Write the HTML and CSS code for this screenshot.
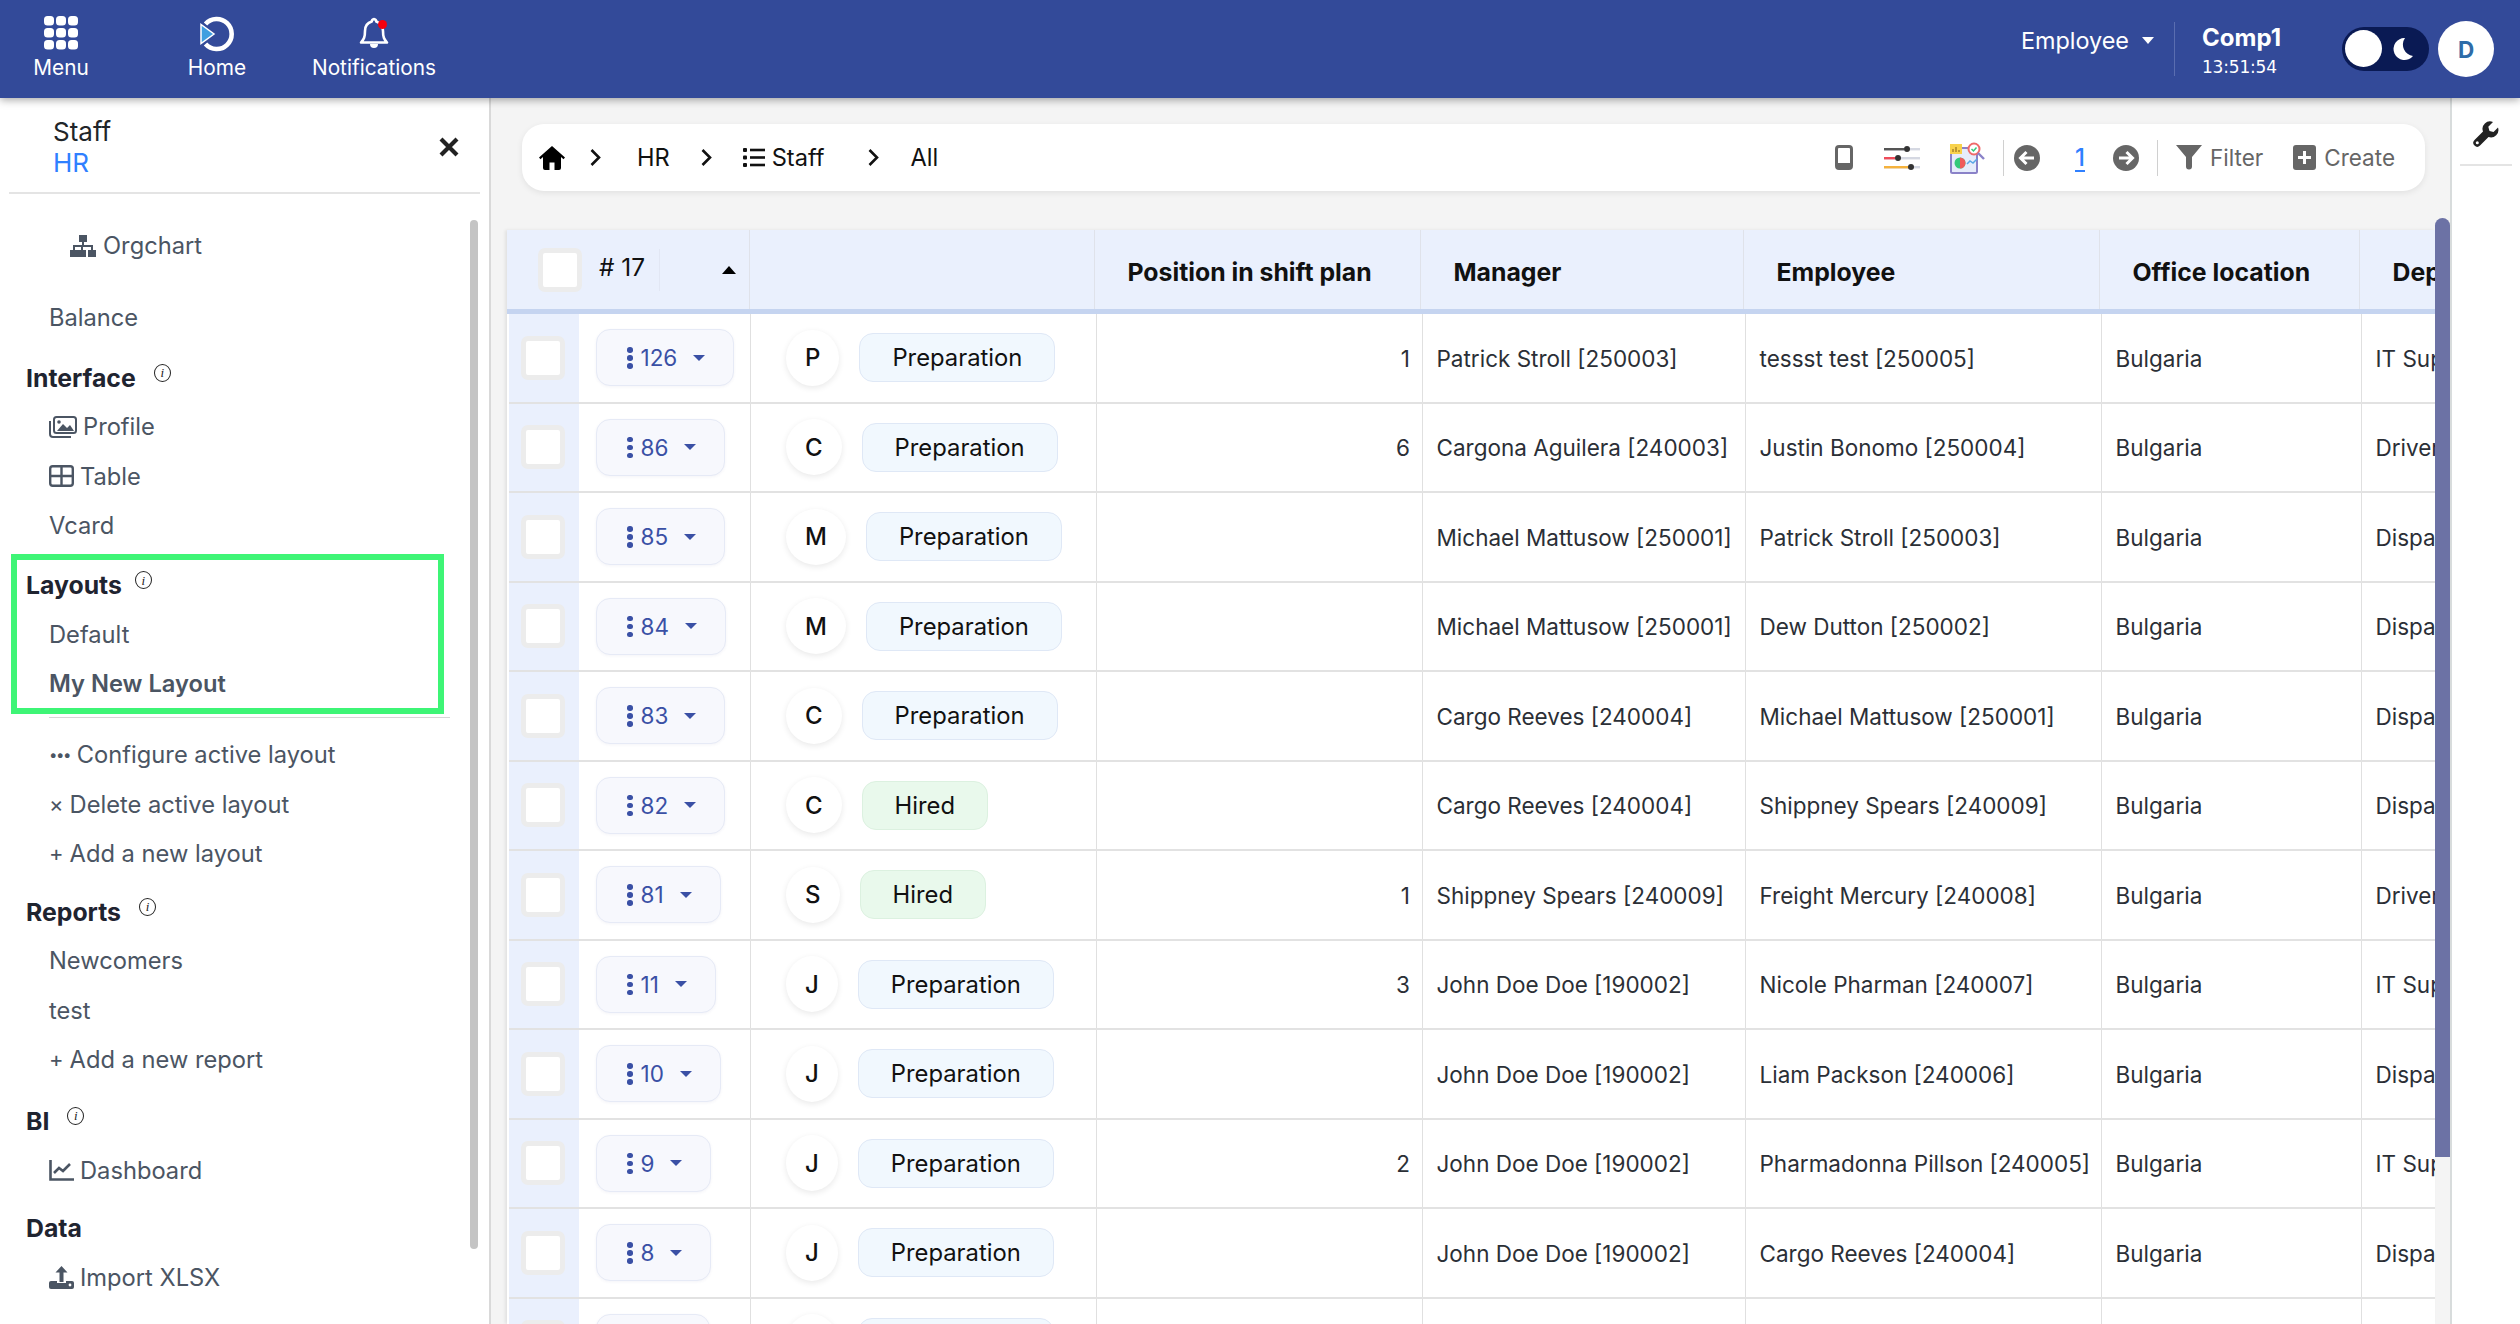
FILE: index.html
```html
<!DOCTYPE html>
<html lang="en">
<head>
<meta charset="utf-8">
<title>Staff</title>
<link rel="stylesheet" href="styles.css">
</head>
<body>
<header class="topbar">
  <nav class="topnav">
    <a class="navitem navitem-menu">
      <svg class="navicon" width="34" height="34" viewBox="0 0 34 34"><g fill="#fff"><rect x="0" y="0" width="10" height="9.5" rx="3.5"/><rect x="12" y="0" width="10" height="9.5" rx="3.5"/><rect x="24" y="0" width="10" height="9.5" rx="3.5"/><rect x="0" y="12" width="10" height="9.5" rx="3.5"/><rect x="12" y="12" width="10" height="9.5" rx="3.5"/><rect x="24" y="12" width="10" height="9.5" rx="3.5"/><rect x="0" y="24" width="10" height="9.5" rx="3.5"/><rect x="12" y="24" width="10" height="9.5" rx="3.5"/><rect x="24" y="24" width="10" height="9.5" rx="3.5"/></g></svg>
      <span>Menu</span>
    </a>
    <a class="navitem navitem-home">
      <svg class="navicon" width="36" height="36" viewBox="0 0 36 36"><path d="M6.500 8A15 15 0 1 1 6.500 28" fill="none" stroke="#fff" stroke-width="4.600"/><path d="M2 8.500v19L15 18z" fill="#3f9fe0" stroke="#fff" stroke-width="1.500"/></svg>
      <span>Home</span>
    </a>
    <a class="navitem navitem-notif">
      <span class="bellwrap">
        <svg class="navicon" width="30" height="34" viewBox="0 0 30 34"><path d="M15 3a2.400 2.400 0 0 1 2.200 2.600C22 7 24 10.500 24 15c0 6 1 8 4 11.500H2C5 23 6 21 6 15c0-4.500 2-8 6.800-9.400A2.400 2.400 0 0 1 15 3z" fill="none" stroke="#fff" stroke-width="2.600" stroke-linejoin="round"/><path d="M11 28h8a4 4 0 0 1-8 0z" fill="#fff"/></svg>
        <i class="bell-dot"></i>
      </span>
      <span>Notifications</span>
    </a>
  </nav>
  <div class="topright">
    <div class="role">Employee<i class="caret caret-white"></i></div>
    <div class="company">
      <b>Comp1</b>
      <span class="clock">13:51:54</span>
    </div>
    <div class="toggle">
      <i class="knob"></i>
      <svg width="20" height="22" viewBox="0 0 20 22"><path d="M12 0a11 11 0 1 0 8 18A11.500 11.500 0 0 1 12 0z" fill="#fff"/></svg>
    </div>
    <div class="avatar">D</div>
  </div>
</header>

<div class="workspace">
  <aside class="sidebar">
    <div class="sidehead">
      <div class="sidetitle">
        <div class="st-name">Staff</div>
        <div class="st-mod">HR</div>
      </div>
      <svg class="closex" width="22" height="22" viewBox="0 0 22 22"><path d="M3 3l16 16M19 3L3 19" stroke="#222" stroke-width="4.200" fill="none"/></svg>
    </div>
    <div class="sidenav">
      <div class="thumb-side"></div>
      <div class="item item-org">
        <svg class="ic" width="28" height="22" viewBox="0 0 28 22"><path d="M10 0h8v7h-3v3h9v5h3v7h-8v-7h3v-3h-8v3h3v7h-8v-7h3v-3H6v3h3v7H1v-7h3v-5h9V7h-3z" fill="#4b5563"/></svg>
        Orgchart
      </div>
      <div class="item item-bal">Balance</div>

      <div class="heading">Interface<span class="info">i</span></div>
      <div class="item"><svg class="ic" width="28" height="22" viewBox="0 0 28 22"><rect x="5" y="1" width="22" height="16" rx="2.500" fill="none" stroke="#4b5563" stroke-width="2"/><path d="M8 15l6-7 4 4 3-3 4 6z" fill="#4b5563"/><circle cx="10" cy="6" r="1.800" fill="#4b5563"/><path d="M1 5v13a3 3 0 0 0 3 3h18" fill="none" stroke="#4b5563" stroke-width="2"/></svg>Profile</div>
      <div class="item"><svg class="ic" width="25" height="22" viewBox="0 0 25 22"><rect x="1.200" y="1.200" width="22.600" height="19.600" rx="2.500" fill="none" stroke="#4b5563" stroke-width="2.400"/><path d="M12.500 1v20M1 11h23" stroke="#4b5563" stroke-width="2.400"/></svg>Table</div>
      <div class="item">Vcard</div>

      <section class="hl-section">
        <div class="annot"></div>
        <div class="heading">Layouts<span class="info info-tight">i</span></div>
        <div class="item">Default</div>
        <div class="item item-active">My New Layout</div>
      </section>
      <div class="rule"></div>
      <div class="item"><span class="dots">•••</span>Configure active layout</div>
      <div class="item"><span class="mark">×</span>Delete active layout</div>
      <div class="item"><span class="mark">+</span>Add a new layout</div>

      <div class="heading heading-reports">Reports<span class="info">i</span></div>
      <div class="item">Newcomers</div>
      <div class="item">test</div>
      <div class="item"><span class="mark">+</span>Add a new report</div>

      <div class="heading heading-bi">BI<span class="info">i</span></div>
      <div class="item"><svg class="ic" width="25" height="21" viewBox="0 0 25 21"><path d="M1.500 0v19.500H25" fill="none" stroke="#4b5563" stroke-width="2.600"/><path d="M5 13l5-5 4 3 7-7" fill="none" stroke="#4b5563" stroke-width="2.600"/></svg>Dashboard</div>

      <div class="heading heading-data">Data</div>
      <div class="item"><svg class="ic" width="25" height="23" viewBox="0 0 25 23"><rect x="0" y="15" width="25" height="8" rx="2" fill="#4b5563"/><rect x="8" y="13" width="9" height="4" fill="#fff"/><path d="M12.500 0l6 6.500h-4V16h-4V6.500h-4z" fill="#4b5563"/><circle cx="21" cy="19" r="1.400" fill="#fff"/></svg>Import XLSX</div>
    </div>
  </aside>

  <main class="content">
    <div class="crumbbar">
      <svg class="home" width="26" height="24" viewBox="0 0 26 24"><path d="M13 0L0 11.500l1.500 1.800L4 11v11a2 2 0 0 0 2 2h4.500v-7.500h5V24H20a2 2 0 0 0 2-2V11l2.500 2.300 1.500-1.800z" fill="#000"/></svg>
      <svg class="chev chev-first" width="11" height="17" viewBox="0 0 11 17"><path d="M1.500 1l7.500 7.500L1.500 16" fill="none" stroke="#111" stroke-width="2.600"/></svg>
      <span class="crumb crumb-hr">HR</span>
      <svg class="chev" width="11" height="17" viewBox="0 0 11 17"><path d="M1.500 1l7.500 7.500L1.500 16" fill="none" stroke="#111" stroke-width="2.600"/></svg>
      <span class="crumb crumb-staff"><svg width="22" height="19" viewBox="0 0 22 19"><g fill="#111"><rect x="0" y="0" width="4" height="4" rx="1"/><rect x="0" y="7.500" width="4" height="4" rx="1"/><rect x="0" y="15" width="4" height="4" rx="1"/><rect x="7" y="0.700" width="15" height="2.600"/><rect x="7" y="8.200" width="15" height="2.600"/><rect x="7" y="15.700" width="15" height="2.600"/></g></svg>Staff</span>
      <svg class="chev chev-staff" width="11" height="17" viewBox="0 0 11 17"><path d="M1.500 1l7.500 7.500L1.500 16" fill="none" stroke="#111" stroke-width="2.600"/></svg>
      <span class="crumb">All</span>

      <div class="tools">
        <div class="toolgroup">
          <svg width="18" height="25" viewBox="0 0 18 25"><rect x="1.500" y="1.500" width="15" height="22" rx="2.500" fill="none" stroke="#666" stroke-width="3"/><rect x="2" y="18" width="14" height="5" fill="#666"/></svg>
          <svg width="38" height="26" viewBox="0 0 38 26"><rect x="1" y="3" width="36" height="2.400" fill="#d5d8e2"/><rect x="1" y="3" width="20" height="2.400" fill="#555"/><circle cx="24" cy="4" r="3" fill="#333"/><rect x="1" y="12" width="36" height="2.400" fill="#d5d8e2"/><rect x="1" y="12" width="11" height="2.400" fill="#ef4b5a"/><circle cx="15" cy="13" r="3" fill="#333"/><rect x="1" y="21" width="36" height="2.400" fill="#d5d8e2"/><rect x="1" y="21" width="26" height="2.400" fill="#f5b23c"/><circle cx="28" cy="22" r="3" fill="#333"/></svg>
          <svg width="35" height="32" viewBox="0 0 35 32"><rect x="1" y="6" width="26" height="25" rx="1.500" fill="#e6ecfb" stroke="#8a82c8" stroke-width="2"/><rect x="0" y="2" width="12" height="10" fill="#f8d24c"/><path d="M3 10V7M6 10V5M9 10V8" stroke="#a9852a" stroke-width="1.500"/><circle cx="10" cy="21" r="5.500" fill="#35c97a"/><path d="M10 15.500a5.500 5.500 0 0 1 0 11z" fill="#f05b5b"/><path d="M17 22l3-3 3 2 4-4" fill="none" stroke="#59a7e6" stroke-width="1.500"/><circle cx="24" cy="7" r="5.500" fill="#fff" stroke="#ef6a6a" stroke-width="2"/><path d="M21.500 7l2 2 3-3.500" fill="none" stroke="#35c97a" stroke-width="1.500"/><path d="M28 11l6 6" stroke="#8a82c8" stroke-width="2.400"/></svg>
        </div>
        <i class="vline"></i>
        <div class="toolgroup toolgroup-pager">
          <svg width="26" height="26" viewBox="0 0 26 26"><circle cx="13" cy="13" r="13" fill="#666"/><path d="M20 13H7M12.500 7L6.500 13l6 6" fill="none" stroke="#fff" stroke-width="3"/></svg>
          <span class="page">1</span>
          <svg width="26" height="26" viewBox="0 0 26 26"><circle cx="13" cy="13" r="13" fill="#666"/><path d="M6 13h13M13.500 7l6 6-6 6" fill="none" stroke="#fff" stroke-width="3"/></svg>
        </div>
        <i class="vline"></i>
        <div class="toolgroup toolgroup-actions">
          <span class="tool"><svg width="26" height="25" viewBox="0 0 26 25"><path d="M0 0h26L16 12v9.500a3 3 0 0 1-3 3 3 3 0 0 1-3-3V12z" fill="#666"/></svg>Filter</span>
          <span class="tool"><svg width="23" height="25" viewBox="0 0 23 25"><rect width="23" height="25" rx="3" fill="#666"/><path d="M11.500 6v13M5 12.500h13" stroke="#fff" stroke-width="3"/></svg>Create</span>
        </div>
      </div>
    </div>

    <div class="tablearea">
      <div class="thumb-table"></div>
      <div class="tablewrap">
        <div class="thead">
          <div class="th th-first"><i class="chk"></i><span class="count"># 17</span><i class="th-sep"></i><i class="sortup"></i></div>
          <div class="th"></div>
          <div class="th">Position in shift plan</div>
          <div class="th">Manager</div>
          <div class="th">Employee</div>
          <div class="th">Office location</div>
          <div class="th">Department</div>
        </div>
        <div class="tbody">
          <div class="tr"><div class="td td-chk"><i class="chk"></i></div><div class="td td-btn"><span class="rowbtn"><i class="kebab"></i>126<i class="caret caret-blue"></i></span></div><div class="td td-status"><span class="circle">P</span><span class="badge">Preparation</span></div><div class="td td-num">1</div><div class="td">Patrick Stroll [250003]</div><div class="td">tessst test [250005]</div><div class="td">Bulgaria</div><div class="td">IT Support</div></div>
          <div class="tr"><div class="td td-chk"><i class="chk"></i></div><div class="td td-btn"><span class="rowbtn"><i class="kebab"></i>86<i class="caret caret-blue"></i></span></div><div class="td td-status"><span class="circle">C</span><span class="badge">Preparation</span></div><div class="td td-num">6</div><div class="td">Cargona Aguilera [240003]</div><div class="td">Justin Bonomo [250004]</div><div class="td">Bulgaria</div><div class="td">Driver</div></div>
          <div class="tr"><div class="td td-chk"><i class="chk"></i></div><div class="td td-btn"><span class="rowbtn"><i class="kebab"></i>85<i class="caret caret-blue"></i></span></div><div class="td td-status"><span class="circle">M</span><span class="badge">Preparation</span></div><div class="td td-num"></div><div class="td">Michael Mattusow [250001]</div><div class="td">Patrick Stroll [250003]</div><div class="td">Bulgaria</div><div class="td">Dispatch</div></div>
          <div class="tr"><div class="td td-chk"><i class="chk"></i></div><div class="td td-btn"><span class="rowbtn"><i class="kebab"></i>84<i class="caret caret-blue"></i></span></div><div class="td td-status"><span class="circle">M</span><span class="badge">Preparation</span></div><div class="td td-num"></div><div class="td">Michael Mattusow [250001]</div><div class="td">Dew Dutton [250002]</div><div class="td">Bulgaria</div><div class="td">Dispatch</div></div>
          <div class="tr"><div class="td td-chk"><i class="chk"></i></div><div class="td td-btn"><span class="rowbtn"><i class="kebab"></i>83<i class="caret caret-blue"></i></span></div><div class="td td-status"><span class="circle">C</span><span class="badge">Preparation</span></div><div class="td td-num"></div><div class="td">Cargo Reeves [240004]</div><div class="td">Michael Mattusow [250001]</div><div class="td">Bulgaria</div><div class="td">Dispatch</div></div>
          <div class="tr"><div class="td td-chk"><i class="chk"></i></div><div class="td td-btn"><span class="rowbtn"><i class="kebab"></i>82<i class="caret caret-blue"></i></span></div><div class="td td-status"><span class="circle">C</span><span class="badge badge-green">Hired</span></div><div class="td td-num"></div><div class="td">Cargo Reeves [240004]</div><div class="td">Shippney Spears [240009]</div><div class="td">Bulgaria</div><div class="td">Dispatch</div></div>
          <div class="tr"><div class="td td-chk"><i class="chk"></i></div><div class="td td-btn"><span class="rowbtn"><i class="kebab"></i>81<i class="caret caret-blue"></i></span></div><div class="td td-status"><span class="circle">S</span><span class="badge badge-green">Hired</span></div><div class="td td-num">1</div><div class="td">Shippney Spears [240009]</div><div class="td">Freight Mercury [240008]</div><div class="td">Bulgaria</div><div class="td">Driver</div></div>
          <div class="tr"><div class="td td-chk"><i class="chk"></i></div><div class="td td-btn"><span class="rowbtn"><i class="kebab"></i>11<i class="caret caret-blue"></i></span></div><div class="td td-status"><span class="circle">J</span><span class="badge">Preparation</span></div><div class="td td-num">3</div><div class="td">John Doe Doe [190002]</div><div class="td">Nicole Pharman [240007]</div><div class="td">Bulgaria</div><div class="td">IT Support</div></div>
          <div class="tr"><div class="td td-chk"><i class="chk"></i></div><div class="td td-btn"><span class="rowbtn"><i class="kebab"></i>10<i class="caret caret-blue"></i></span></div><div class="td td-status"><span class="circle">J</span><span class="badge">Preparation</span></div><div class="td td-num"></div><div class="td">John Doe Doe [190002]</div><div class="td">Liam Packson [240006]</div><div class="td">Bulgaria</div><div class="td">Dispatch</div></div>
          <div class="tr"><div class="td td-chk"><i class="chk"></i></div><div class="td td-btn"><span class="rowbtn"><i class="kebab"></i>9<i class="caret caret-blue"></i></span></div><div class="td td-status"><span class="circle">J</span><span class="badge">Preparation</span></div><div class="td td-num">2</div><div class="td">John Doe Doe [190002]</div><div class="td">Pharmadonna Pillson [240005]</div><div class="td">Bulgaria</div><div class="td">IT Support</div></div>
          <div class="tr"><div class="td td-chk"><i class="chk"></i></div><div class="td td-btn"><span class="rowbtn"><i class="kebab"></i>8<i class="caret caret-blue"></i></span></div><div class="td td-status"><span class="circle">J</span><span class="badge">Preparation</span></div><div class="td td-num"></div><div class="td">John Doe Doe [190002]</div><div class="td">Cargo Reeves [240004]</div><div class="td">Bulgaria</div><div class="td">Dispatch</div></div>
          <div class="tr"><div class="td td-chk"><i class="chk"></i></div><div class="td td-btn"><span class="rowbtn"><i class="kebab"></i>7<i class="caret caret-blue"></i></span></div><div class="td td-status"><span class="circle">J</span><span class="badge">Preparation</span></div><div class="td td-num"></div><div class="td"></div><div class="td"></div><div class="td"></div><div class="td"></div></div>
        </div>
      </div>
    </div>
  </main>

  <aside class="rightpanel">
    <div class="wrench">
      <svg width="26" height="26" viewBox="0 0 26 26"><path d="M25 6.500l-4.500 4.500-4-1-1.200-4.200L20 1A7.500 7.500 0 0 0 10 10.500L1.500 19a3.800 3.800 0 0 0 5.500 5.500L15.500 16A7.500 7.500 0 0 0 25 6.500z" fill="#222"/><circle cx="4.300" cy="21.700" r="1.500" fill="#fff"/></svg>
    </div>
  </aside>
</div>
</body>
</html>
```
FILE: styles.css
```css
* { box-sizing: border-box; }
html, body { margin: 0; padding: 0; height: 1324px; overflow: hidden; }
body { font-family: Inter, "Noto Sans", sans-serif; font-size: 22.5px; color: #212529; background: #fff; }
i { display: block; font-style: normal; }

.topbar { position: relative; z-index: 5; height: 98px; background: #334a99; color: #fff; display: flex; justify-content: space-between; box-shadow: 0 2px 8px rgba(0,0,0,.35); }
.topnav { display: flex; }
.navitem { display: flex; flex-direction: column; align-items: center; font-size: 20.8px; line-height: 26px; padding-top: 16px; }
.navicon { display: block; }
.navitem > span:last-child { margin-top: 5px; }
.navitem-menu { width: 122px; }
.navitem-home { width: 190px; }
.navitem-home .navicon { margin-bottom: -2px; }
.navitem-notif { width: 124px; }
.bellwrap { position: relative; display: block; }
.bell-dot { position: absolute; top: 4px; left: 19px; width: 9px; height: 9px; border-radius: 50%; background: #f4000e; }

.topright { display: flex; align-items: center; padding-right: 26px; }
.role { display: flex; align-items: center; font-size: 23.4px; padding-bottom: 18px; }
.caret { width: 0; height: 0; border-left: 6.500px solid transparent; border-right: 6.500px solid transparent; border-top: 7px solid #fff; }
.caret-white { margin-left: 13px; }
.company { margin-left: 20px; border-left: 1px solid #5a6db0; padding-left: 27px; height: 54px; margin-top: -1px; width: 168px; display: flex; flex-direction: column; }
.company b { font-size: 24px; line-height: 30px; font-weight: 700; margin-top: 1px; }
.clock { font-family: "DejaVu Sans", sans-serif; font-size: 17px; line-height: 20px; margin-top: 4px; letter-spacing: -.2px; }
.toggle { width: 87px; height: 44px; border-radius: 22px; background: #0a1a54; display: flex; align-items: center; justify-content: space-between; padding: 0 16px 0 3px; margin-top: -1px; }
.knob { width: 37px; height: 37px; border-radius: 50%; background: #fff; }
.avatar { width: 56px; height: 56px; margin-left: 9px; border-radius: 50%; background: #fff; color: #2e6ca8; font-weight: 700; font-size: 22.500px; display: flex; align-items: center; justify-content: center; }

.workspace { display: flex; height: 1226px; }

.sidebar { width: 491px; flex: none; border-right: 2px solid #d9d9d9; background: #fff; }
.sidehead { height: 96px; margin: 0 9px; border-bottom: 2px solid #e4e4e4; padding: 0 20px 0 44px; display: flex; align-items: center; justify-content: space-between; }
.sidetitle { padding-top: 5px; }
.st-name { font-size: 26px; line-height: 30px; color: #212529; }
.st-mod { font-size: 26px; line-height: 31px; color: #2f80ff; }
.closex { margin-top: 3px; }
.sidenav { position: relative; padding: 27px 0 0 26px; }
.thumb-side { position: absolute; left: 470px; top: 26px; width: 8px; height: 1029px; border-radius: 4px; background: #c4c4c4; }
.item { display: flex; align-items: center; height: 49.200px; padding-left: 23px; color: #4b5563; font-size: 23.700px; }
.item-org { padding-left: 43px; }
.item-bal { margin-top: 23px; }
.ic { flex: none; margin-right: 6px; }
.item-active { font-weight: 600; }
.heading { display: flex; align-items: center; height: 49px; margin-top: 11px; font-weight: 700; font-size: 24.800px; color: #1f2430; }
.heading-reports { margin-top: 9.500px; }
.heading-bi { margin-top: 12.500px; }
.heading-data { margin-top: 9px; }
.info { width: 17px; height: 18px; margin: -10px 0 0 18px; border: 1px solid #222; border-radius: 50%; display: flex; align-items: center; justify-content: center; font-family: "Liberation Serif", serif; font-style: italic; font-weight: 400; font-size: 13px; line-height: 1; color: #222; }
.info-tight { margin-left: 13px; }
.hl-section { position: relative; }
.annot { position: absolute; left: -15px; top: -7.400px; width: 433px; height: 160px; border: 6px solid #3ef576; }
.rule { height: 1px; margin: 9px 39px 0 23px; background: #d6d6d6; }
.rule + .item { margin-top: 12px; }
.dots { font-size: 15px; letter-spacing: -1.500px; margin-right: 7px; }
.mark { margin-right: 6px; font-size: 22px; }

.content { flex: 1; min-width: 0; background: #f4f4f4; display: flex; flex-direction: column; }
.crumbbar { flex: none; height: 67px; margin: 26px 25px 0 31px; padding: 0 30px 0 17px; background: #fff; border-radius: 22px; box-shadow: 0 2px 6px rgba(0,0,0,.08); display: flex; align-items: center; gap: 31px; color: #111; font-size: 23.600px; }
.home { flex: none; margin-right: -6px; }
.chev { flex: none; }
.crumb-hr { margin-left: 5px; }
.crumb-staff { display: flex; align-items: center; gap: 7px; }
.chev-staff { margin-left: 13px; }
.tools { margin-left: auto; display: flex; align-items: center; gap: 18px; color: #666; font-size: 22.500px; }
.toolgroup { display: flex; align-items: center; gap: 29.500px; }
.toolgroup svg { display: block; flex: none; }
.toolgroup-pager { gap: 30px; margin-left: -8px; }
.toolgroup-actions { gap: 30px; }
.vline { width: 1px; height: 36px; background: #d0d0d0; }
.page { margin: 0 -2px 0 5px; color: #2f80ff; font-size: 24px; font-weight: 500; text-decoration: underline; text-underline-offset: 4px; }
.tool { display: flex; align-items: center; gap: 8px; }

.tablearea { position: relative; flex: 1; min-height: 0; margin-top: 39px; padding: 0 15px 0 16px; }
.thumb-table { position: absolute; z-index: 3; right: 0; top: -12px; width: 15px; height: 939px; border-radius: 8px 8px 0 0; background: #6c72a5; }
.tablewrap { height: 100%; overflow: hidden; background: #fff; box-shadow: -2px 0 3px rgba(0,0,0,.08); }
.thead, .tr { display: grid; width: 1990px; }
.thead { grid-template-columns: 243px 345px 326px 323px 356px 260px 137px; height: 84px; background: #eaf0fd; border-bottom: 5px solid #c5d4f0; }
.th { display: flex; align-items: center; padding: 5px 0 0 32.500px; border-right: 1.500px solid #dfe2ea; font-weight: 700; font-size: 24.800px; color: #111; white-space: nowrap; }
.th-first { padding: 0 0 0 31px; font-weight: 400; font-size: 24.400px; }
.chk { flex: none; width: 44px; height: 44px; background: #fff; border: 5px solid #ececec; border-radius: 7px; }
.count { margin: -5px 0 0 17px; }
.th-sep { width: 1px; height: 42px; margin-left: 14px; background: #e2e7f4; }
.sortup { width: 0; height: 0; margin-left: 62px; border-left: 7.500px solid transparent; border-right: 7.500px solid transparent; border-bottom: 8px solid #000; }
.tbody { padding-left: 2px; }
.tr { grid-template-columns: 70px 172px 346px 326px 323px 356px 260px 137px; height: 89.500px; border-bottom: 2px solid #e2e2e2; }
.td { display: flex; align-items: center; padding: 1px 0 0 13.500px; border-right: 1.500px solid #e0e0e0; color: #2b2f36; white-space: nowrap; }
.td-chk { background: #eaf0fd; padding: 0 0 0 12px; border-right: 0; }
.td-btn { padding: 0 0 0 17px; }
.td-status { padding: 0 0 0 35px; }
.td-num { justify-content: flex-end; padding: 1px 12px 0 0; }
.rowbtn { display: flex; align-items: center; height: 57px; padding: 0 28px 0 30px; color: #3a50a5; background: #f7f8fd; border: 1.500px solid #e6eaf6; border-radius: 14px; box-shadow: 0 1px 3px rgba(60,70,140,.06); }
.kebab { width: 5.500px; height: 5.500px; margin: 0 8px 0 0; border-radius: 50%; background: #3a50a5; box-shadow: 0 -8px 0 #3a50a5, 0 8px 0 #3a50a5; }
.caret-blue { margin-left: 16px; border-top-color: #3a50a5; border-left-width: 6px; border-right-width: 6px; border-top-width: 6.500px; }
.circle { flex: none; height: 56px; padding: 0 19px; font-size: 24px; display: flex; align-items: center; justify-content: center; border-radius: 50%; background: #fff; color: #111; font-weight: 500; box-shadow: 0 2px 6px rgba(0,0,0,.09); }
.badge { margin-left: 20px; height: 49px; padding: 0 32px; font-size: 23.800px; display: flex; align-items: center; background: #f1f8fe; border: 1.500px solid #dfe8f6; border-radius: 14px; color: #111; }
.badge-green { background: #e9f9ec; border-color: #dcf1e0; }

.rightpanel { width: 70px; flex: none; background: #fff; border-left: 2px solid #d8dcdc; }
.wrench { margin: 0 8px; height: 68px; padding-top: 23px; display: flex; justify-content: center; border-bottom: 2px solid #e4e4e4; }
.wrench svg { display: block; }
```
